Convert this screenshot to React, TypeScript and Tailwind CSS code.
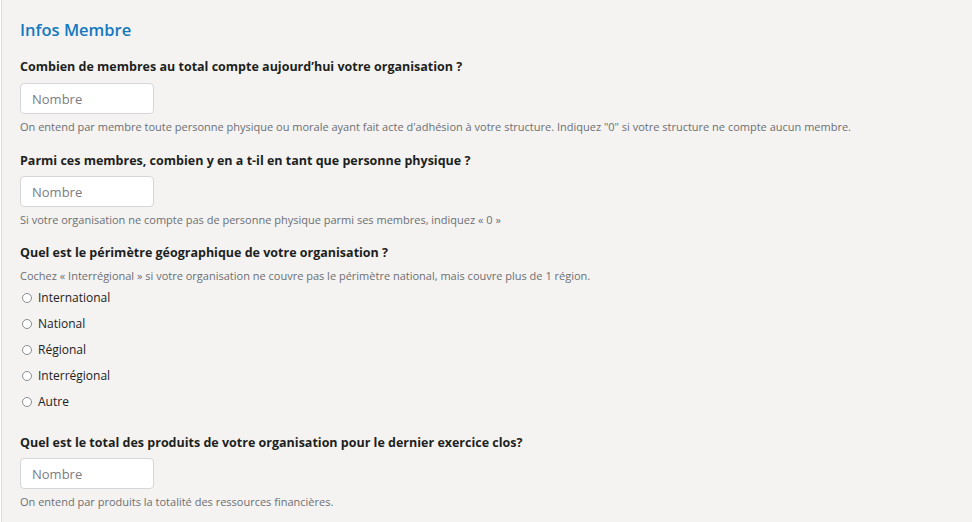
import React from "react";

const options = ["International", "National", "Régional", "Interrégional", "Autre"];

const NumberInput = () => (
  <input
    type="text"
    placeholder="Nombre"
    className="w-[134px] h-[31px] rounded-[4px] border border-[#d4d6d9] bg-white px-[11px] text-[13px] text-[#333] placeholder:text-[#7a7d82] outline-none"
  />
);

const Label = ({ children }: { children: React.ReactNode }) => (
  <h3 className="text-[12.5px] font-bold leading-[18px] text-[#1d1f21]">{children}</h3>
);

const Help = ({ children }: { children: React.ReactNode }) => (
  <p className="text-[11px] leading-[16px] text-[#6c6f73]">{children}</p>
);

const App = () => {
  return (
    <div
      className="min-h-screen w-full bg-[#f4f3f2] border-l border-[#dcdcdc] ml-px"
      style={{ fontFamily: '"Open Sans", "Noto Sans", sans-serif' }}
    >
      <div className="pl-[18px] pt-[18px]">
        <h2 className="text-[16.5px] font-semibold leading-[24px] text-[#1479c0]">Infos Membre</h2>

        <div className="mt-[16px]">
          <Label>Combien de membres au total compte aujourd’hui votre organisation ?</Label>
          <div className="mt-[7px]">
            <NumberInput />
          </div>
          <div className="mt-[5px]">
            <Help>
              On entend par membre toute personne physique ou morale ayant fait acte d'adhésion à votre structure. Indiquez "0" si votre structure ne compte aucun membre.
            </Help>
          </div>
        </div>

        <div className="mt-[17px]">
          <Label>Parmi ces membres, combien y en a t-il en tant que personne physique ?</Label>
          <div className="mt-[6px]">
            <NumberInput />
          </div>
          <div className="mt-[5px]">
            <Help>Si votre organisation ne compte pas de personne physique parmi ses membres, indiquez « 0 »</Help>
          </div>
        </div>

        <div className="mt-[16px]">
          <Label>Quel est le périmètre géographique de votre organisation ?</Label>
          <div className="mt-[6px]">
            <Help>Cochez « Interrégional » si votre organisation ne couvre pas le périmètre national, mais couvre plus de 1 région.</Help>
          </div>
          <div className="mt-[1px] flex flex-col">
            {options.map((o) => (
              <label key={o} className="flex h-[26px] items-center gap-[6px] pl-[2px] text-[12px] text-[#222]">
                <span className="inline-block h-[10px] w-[10px] rounded-full border border-[#8a8d91] bg-white" />
                {o}
              </label>
            ))}
          </div>
        </div>

        <div className="mt-[19px]">
          <Label>Quel est le total des produits de votre organisation pour le dernier exercice clos?</Label>
          <div className="mt-[6px]">
            <NumberInput />
          </div>
          <div className="mt-[5px]">
            <Help>On entend par produits la totalité des ressources financières.</Help>
          </div>
        </div>
      </div>
    </div>
  );
};

export default App;
